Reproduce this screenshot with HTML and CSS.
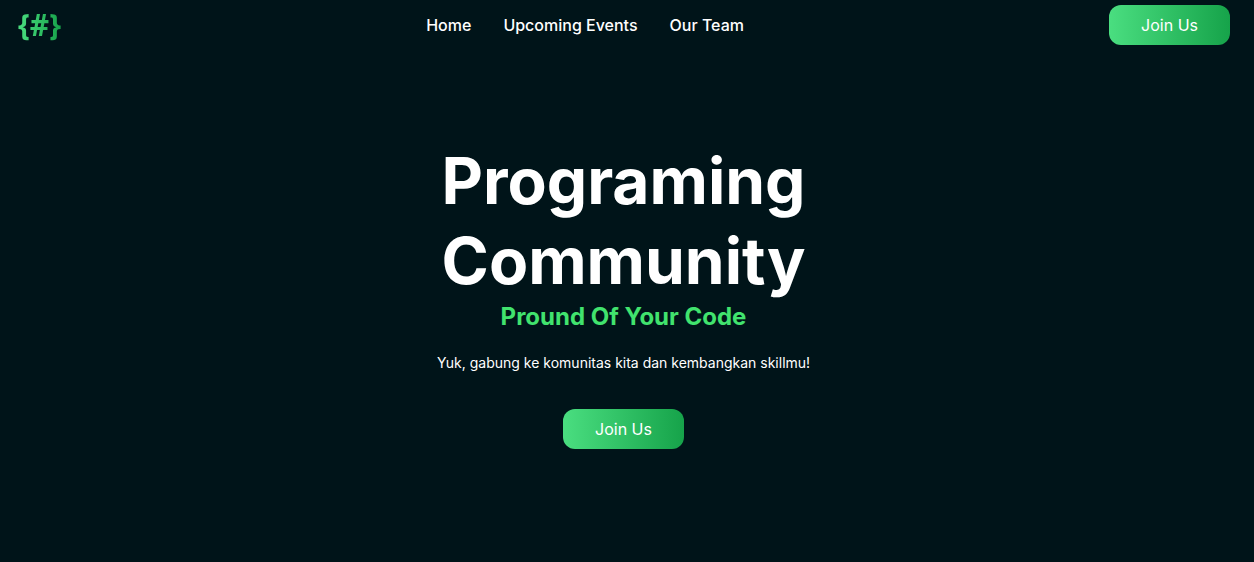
FILE: index.html
```html
<!DOCTYPE html>
<html lang="id">
<head>
<meta charset="utf-8">
<meta name="viewport" content="width=device-width, initial-scale=1">
<title>Programing Community</title>
<link rel="stylesheet" href="styles.css">
</head>
<body>
<header class="navbar">
  <a class="logo" href="#">{#}</a>
  <nav class="links">
    <a href="#">Home</a>
    <a href="#">Upcoming Events</a>
    <a href="#">Our Team</a>
  </nav>
  <button class="button" type="button">Join Us</button>
</header>
<main class="hero">
  <h1 class="title">Programing Community</h1>
  <h2 class="tagline">Pround Of Your Code</h2>
  <p class="lead">Yuk, gabung ke komunitas kita dan kembangkan skillmu!</p>
  <button class="button" type="button">Join Us</button>
</main>
</body>
</html>
```
FILE: styles.css
```css
* {
  box-sizing: border-box;
}

body {
  margin: 0;
  min-height: 100vh;
  display: flex;
  flex-direction: column;
  background: #001419;
  color: #fff;
  font-family: Inter, "Liberation Sans", sans-serif;
  font-size: 16px;
  line-height: 24px;
}

.navbar {
  display: flex;
  justify-content: space-between;
  align-items: center;
  height: 50px;
  padding: 0 24px 0 18px;
}

.logo {
  background: linear-gradient(to right, #4ade80, #16a34a);
  background-clip: text;
  -webkit-background-clip: text;
  color: transparent;
  font-family: "Open Sans", "Noto Sans", sans-serif;
  font-size: 30px;
  font-weight: 700;
  line-height: 36px;
  text-decoration: none;
}

.links {
  display: flex;
  gap: 32px;
}

.links a {
  color: #fff;
  font-weight: 500;
  text-decoration: none;
}

.button {
  padding: 8px 32px;
  border: 0;
  border-radius: 12px;
  background: linear-gradient(to right, #4ade80, #16a34a);
  color: #fff;
  font: inherit;
  cursor: pointer;
}

.hero {
  flex: 1;
  display: flex;
  flex-direction: column;
  align-items: center;
  padding: 91px 24px 0 17px;
  text-align: center;
}

.title {
  max-width: 480px;
  margin: 0;
  font-size: 64px;
  font-weight: 700;
  line-height: 80px;
}

.tagline {
  margin: 0;
  padding-bottom: 20px;
  color: #41e36e;
  font-size: 24px;
  font-weight: 700;
  line-height: 32px;
}

.lead {
  margin: 0 0 36px;
  font-size: 14px;
  font-weight: 400;
  line-height: 20px;
}
```
